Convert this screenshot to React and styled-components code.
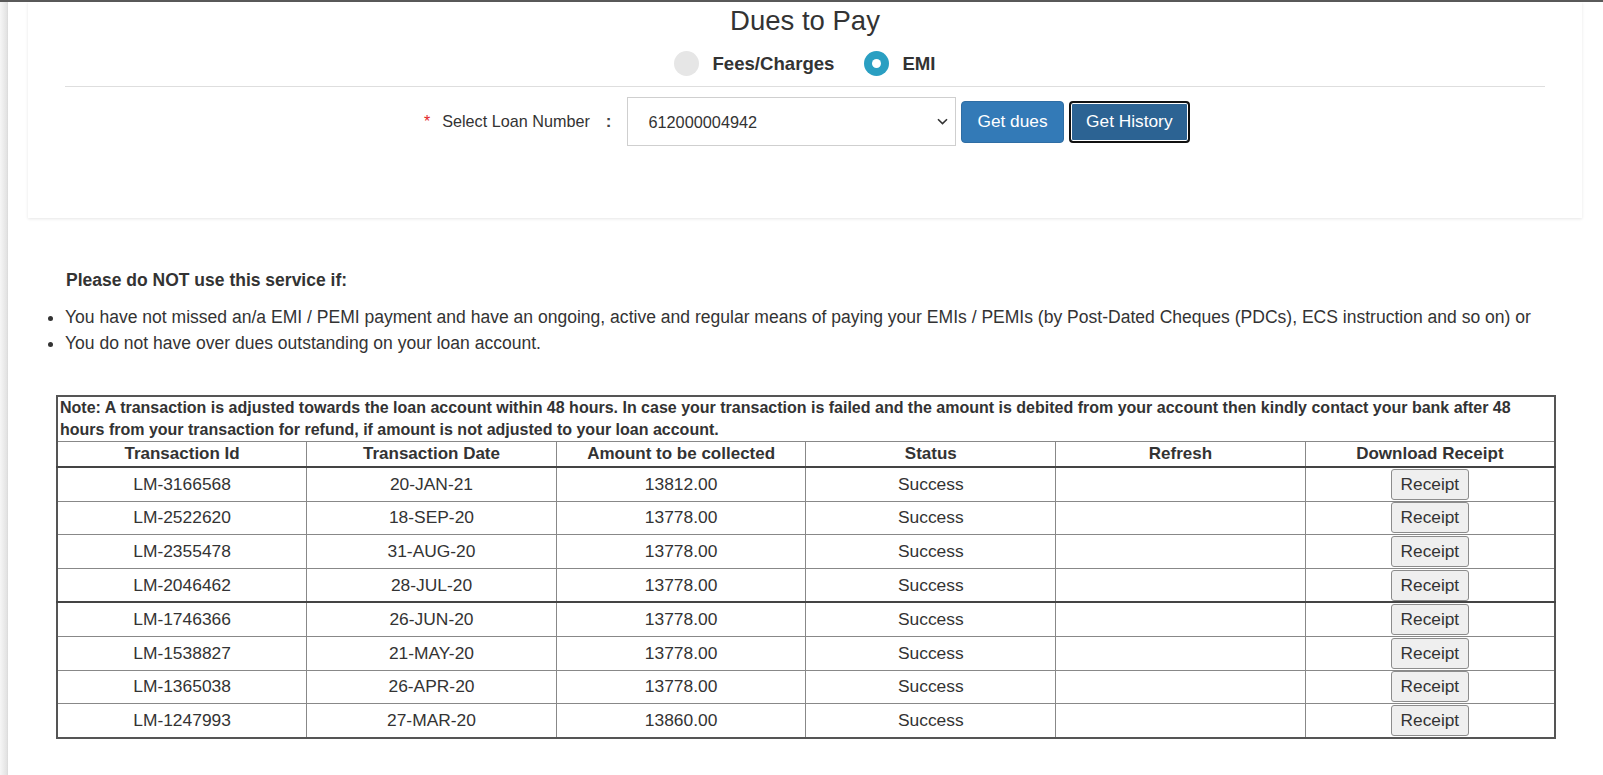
import React, { useState } from "react";
import styled, { createGlobalStyle } from "styled-components";

const GlobalStyle = createGlobalStyle`
  html, body {
    margin: 0;
    padding: 0;
    background: #fff;
  }
  body {
    font-family: "Liberation Sans", Arial, sans-serif;
    color: #333;
  }
  * {
    box-sizing: border-box;
  }
`;

const payments = [
  { id: "LM-3166568", date: "20-JAN-21", amount: "13812.00", status: "Success" },
  { id: "LM-2522620", date: "18-SEP-20", amount: "13778.00", status: "Success" },
  { id: "LM-2355478", date: "31-AUG-20", amount: "13778.00", status: "Success" },
  { id: "LM-2046462", date: "28-JUL-20", amount: "13778.00", status: "Success" },
  { id: "LM-1746366", date: "26-JUN-20", amount: "13778.00", status: "Success" },
  { id: "LM-1538827", date: "21-MAY-20", amount: "13778.00", status: "Success" },
  { id: "LM-1365038", date: "26-APR-20", amount: "13778.00", status: "Success" },
  { id: "LM-1247993", date: "27-MAR-20", amount: "13860.00", status: "Success" },
];

const columns = [
  "Transaction Id",
  "Transaction Date",
  "Amount to be collected",
  "Status",
  "Refresh",
  "Download Receipt",
];

export default function App() {
  const [mode, setMode] = useState("emi");

  const groups = [payments.slice(0, 4), payments.slice(4)];

  return (
    <>
      <GlobalStyle />
      <Page>
        <Shade />
        <Main>
          <Card>
            <Title>Dues to Pay</Title>
            <RadioGroup>
              <RadioOption onClick={() => setMode("fees")}>
                <RadioDot $checked={mode === "fees"} />
                <RadioLabel>Fees/Charges</RadioLabel>
              </RadioOption>
              <RadioOption onClick={() => setMode("emi")}>
                <RadioDot $checked={mode === "emi"} />
                <RadioLabel>EMI</RadioLabel>
              </RadioOption>
            </RadioGroup>
            <Divider />
            <LoanRow>
              <Required>*</Required>
              <FieldLabel>Select Loan Number</FieldLabel>
              <Colon>:</Colon>
              <SelectWrap>
                <LoanSelect defaultValue="612000004942">
                  <option value="612000004942">612000004942</option>
                </LoanSelect>
                <Chevron width="11" height="7" viewBox="0 0 11 7">
                  <path
                    d="M1 1.2 L5.5 5.6 L10 1.2"
                    fill="none"
                    stroke="#333"
                    strokeWidth="1.6"
                  />
                </Chevron>
              </SelectWrap>
              <ActionButton>Get dues</ActionButton>
              <ActionButton $focused>Get History</ActionButton>
            </LoanRow>
          </Card>

          <Notice>
            <NoticeTitle>Please do NOT use this service if:</NoticeTitle>
            <NoticeList>
              <li>
                You have not missed an/a EMI / PEMI payment and have an ongoing,
                active and regular means of paying your EMIs / PEMIs (by
                Post-Dated Cheques (PDCs), ECS instruction and so on) or
              </li>
              <li>You do not have over dues outstanding on your loan account.</li>
            </NoticeList>

            <History>
              <thead>
                <tr>
                  <NoteCell colSpan={6}>
                    Note: A transaction is adjusted towards the loan account
                    within 48 hours. In case your transaction is failed and the
                    amount is debited from your account then kindly contact your
                    bank after 48 hours from your transaction for refund, if
                    amount is not adjusted to your loan account.
                  </NoteCell>
                </tr>
                <HeadRow>
                  {columns.map((c) => (
                    <HeadCell key={c}>{c}</HeadCell>
                  ))}
                </HeadRow>
              </thead>
              {groups.map((rows, gi) => (
                <Group key={gi}>
                  {rows.map((p) => (
                    <tr key={p.id}>
                      <Cell>{p.id}</Cell>
                      <Cell>{p.date}</Cell>
                      <Cell>{p.amount}</Cell>
                      <Cell>{p.status}</Cell>
                      <Cell></Cell>
                      <Cell>
                        <ReceiptButton>Receipt</ReceiptButton>
                      </Cell>
                    </tr>
                  ))}
                </Group>
              ))}
            </History>
          </Notice>
        </Main>
      </Page>
    </>
  );
}

const Page = styled.div`
  display: flex;
  min-height: 100vh;
  border-top: 2px solid #5a5a5a;
`;

const Shade = styled.div`
  width: 8px;
  flex-shrink: 0;
  background: linear-gradient(to right, #f6f6f6, #e4e4e4 80%, #d9d9d9);
`;

const Main = styled.div`
  flex: 1;
  min-width: 0;
`;

const Card = styled.div`
  margin: 0 21px 0 20px;
  padding: 3px 37px 72px;
  background: #fff;
  box-shadow: 0 1px 3px rgba(0, 0, 0, 0.1);
`;

const Title = styled.h2`
  margin: 0;
  text-align: center;
  font-size: 27.5px;
  line-height: 32px;
  font-weight: normal;
  color: #333;
`;

const RadioGroup = styled.div`
  display: flex;
  justify-content: center;
  gap: 30px;
  margin-top: 14px;
`;

const RadioOption = styled.label`
  display: flex;
  align-items: center;
  gap: 13px;
  cursor: pointer;
`;

const RadioDot = styled.span`
  width: 25px;
  height: 25px;
  border-radius: 50%;
  display: flex;
  align-items: center;
  justify-content: center;
  background: ${({ $checked }) => ($checked ? "#2a9fc2" : "#e6e6e6")};
  &::after {
    content: "";
    width: 9px;
    height: 9px;
    border-radius: 50%;
    background: #fff;
    display: ${({ $checked }) => ($checked ? "block" : "none")};
  }
`;

const RadioLabel = styled.span`
  font-size: 18.6px;
  font-weight: bold;
  color: #333;
  line-height: 25px;
`;

const Divider = styled.hr`
  margin: 10px 0 0;
  border: none;
  border-top: 1px solid #dedede;
`;

const LoanRow = styled.div`
  display: flex;
  align-items: center;
  justify-content: center;
  margin-top: 10px;
  padding-left: 4px;
`;

const Required = styled.span`
  color: #e32626;
  font-size: 16px;
  margin-right: 12px;
`;

const FieldLabel = styled.span`
  font-size: 16.2px;
  color: #333;
`;

const Colon = styled.span`
  font-size: 17px;
  font-weight: bold;
  color: #444;
  margin: 0 16px;
`;

const SelectWrap = styled.div`
  position: relative;
  width: 329px;
  height: 49px;
`;

const LoanSelect = styled.select`
  appearance: none;
  width: 100%;
  height: 100%;
  border: 1px solid #cfcfcf;
  background: #fff;
  padding: 0 30px 0 20px;
  font-family: "Liberation Sans", Arial, sans-serif;
  font-size: 16.3px;
  color: #333;
  outline: none;
`;

const Chevron = styled.svg`
  position: absolute;
  right: 8px;
  top: 21px;
  pointer-events: none;
`;

const ActionButton = styled.button`
  margin-left: 5px;
  height: 42px;
  padding: 0 ${({ $focused }) => ($focused ? "15.5px" : "15px")};
  border-radius: 4px;
  font-family: "Liberation Sans", Arial, sans-serif;
  font-size: 17.3px;
  color: #fff;
  cursor: pointer;
  background: ${({ $focused }) => ($focused ? "#2c6393" : "#337ab7")};
  border: ${({ $focused }) =>
    $focused ? "2px solid #111" : "1px solid #2e6da4"};
  box-shadow: ${({ $focused }) => ($focused ? "inset 0 0 0 1px #fff" : "none")};
`;

const Notice = styled.div`
  padding-left: 48px;
  margin-top: 50px;
`;

const NoticeTitle = styled.div`
  padding-left: 10px;
  font-size: 17.5px;
  font-weight: bold;
  line-height: 24px;
  color: #333;
`;

const NoticeList = styled.ul`
  margin: 13px 0 0;
  padding-left: 9px;
  font-size: 17.55px;
  line-height: 25.5px;
  color: #333;
`;

const History = styled.table`
  margin-top: 39px;
  width: 1500px;
  table-layout: fixed;
  border-collapse: collapse;
  border: 2px solid #555;
  color: #333;
`;

const NoteCell = styled.td`
  padding: 0 2px;
  font-size: 16px;
  font-weight: bold;
  line-height: 22px;
  text-align: left;
  border: 1px solid #888;
`;

const HeadRow = styled.tr`
  border-bottom: 2px solid #444;
`;

const HeadCell = styled.th`
  padding: 0;
  font-size: 17px;
  font-weight: bold;
  line-height: 24px;
  text-align: center;
  border: 1px solid #888;
  border-bottom: 2px solid #444;
`;

const Group = styled.tbody`
  border-top: 2px solid #444;
`;

const Cell = styled.td`
  padding: 0.8px 1px;
  height: 33.5px;
  font-size: 17.4px;
  text-align: center;
  vertical-align: middle;
  border: 1px solid #888;
`;

const ReceiptButton = styled.button`
  height: 31px;
  padding: 0 9px;
  font-family: "Liberation Sans", Arial, sans-serif;
  font-size: 17.3px;
  color: #333;
  background: #efefef;
  border: 1px solid #8c8c8c;
  border-radius: 3px;
  cursor: pointer;
`;
